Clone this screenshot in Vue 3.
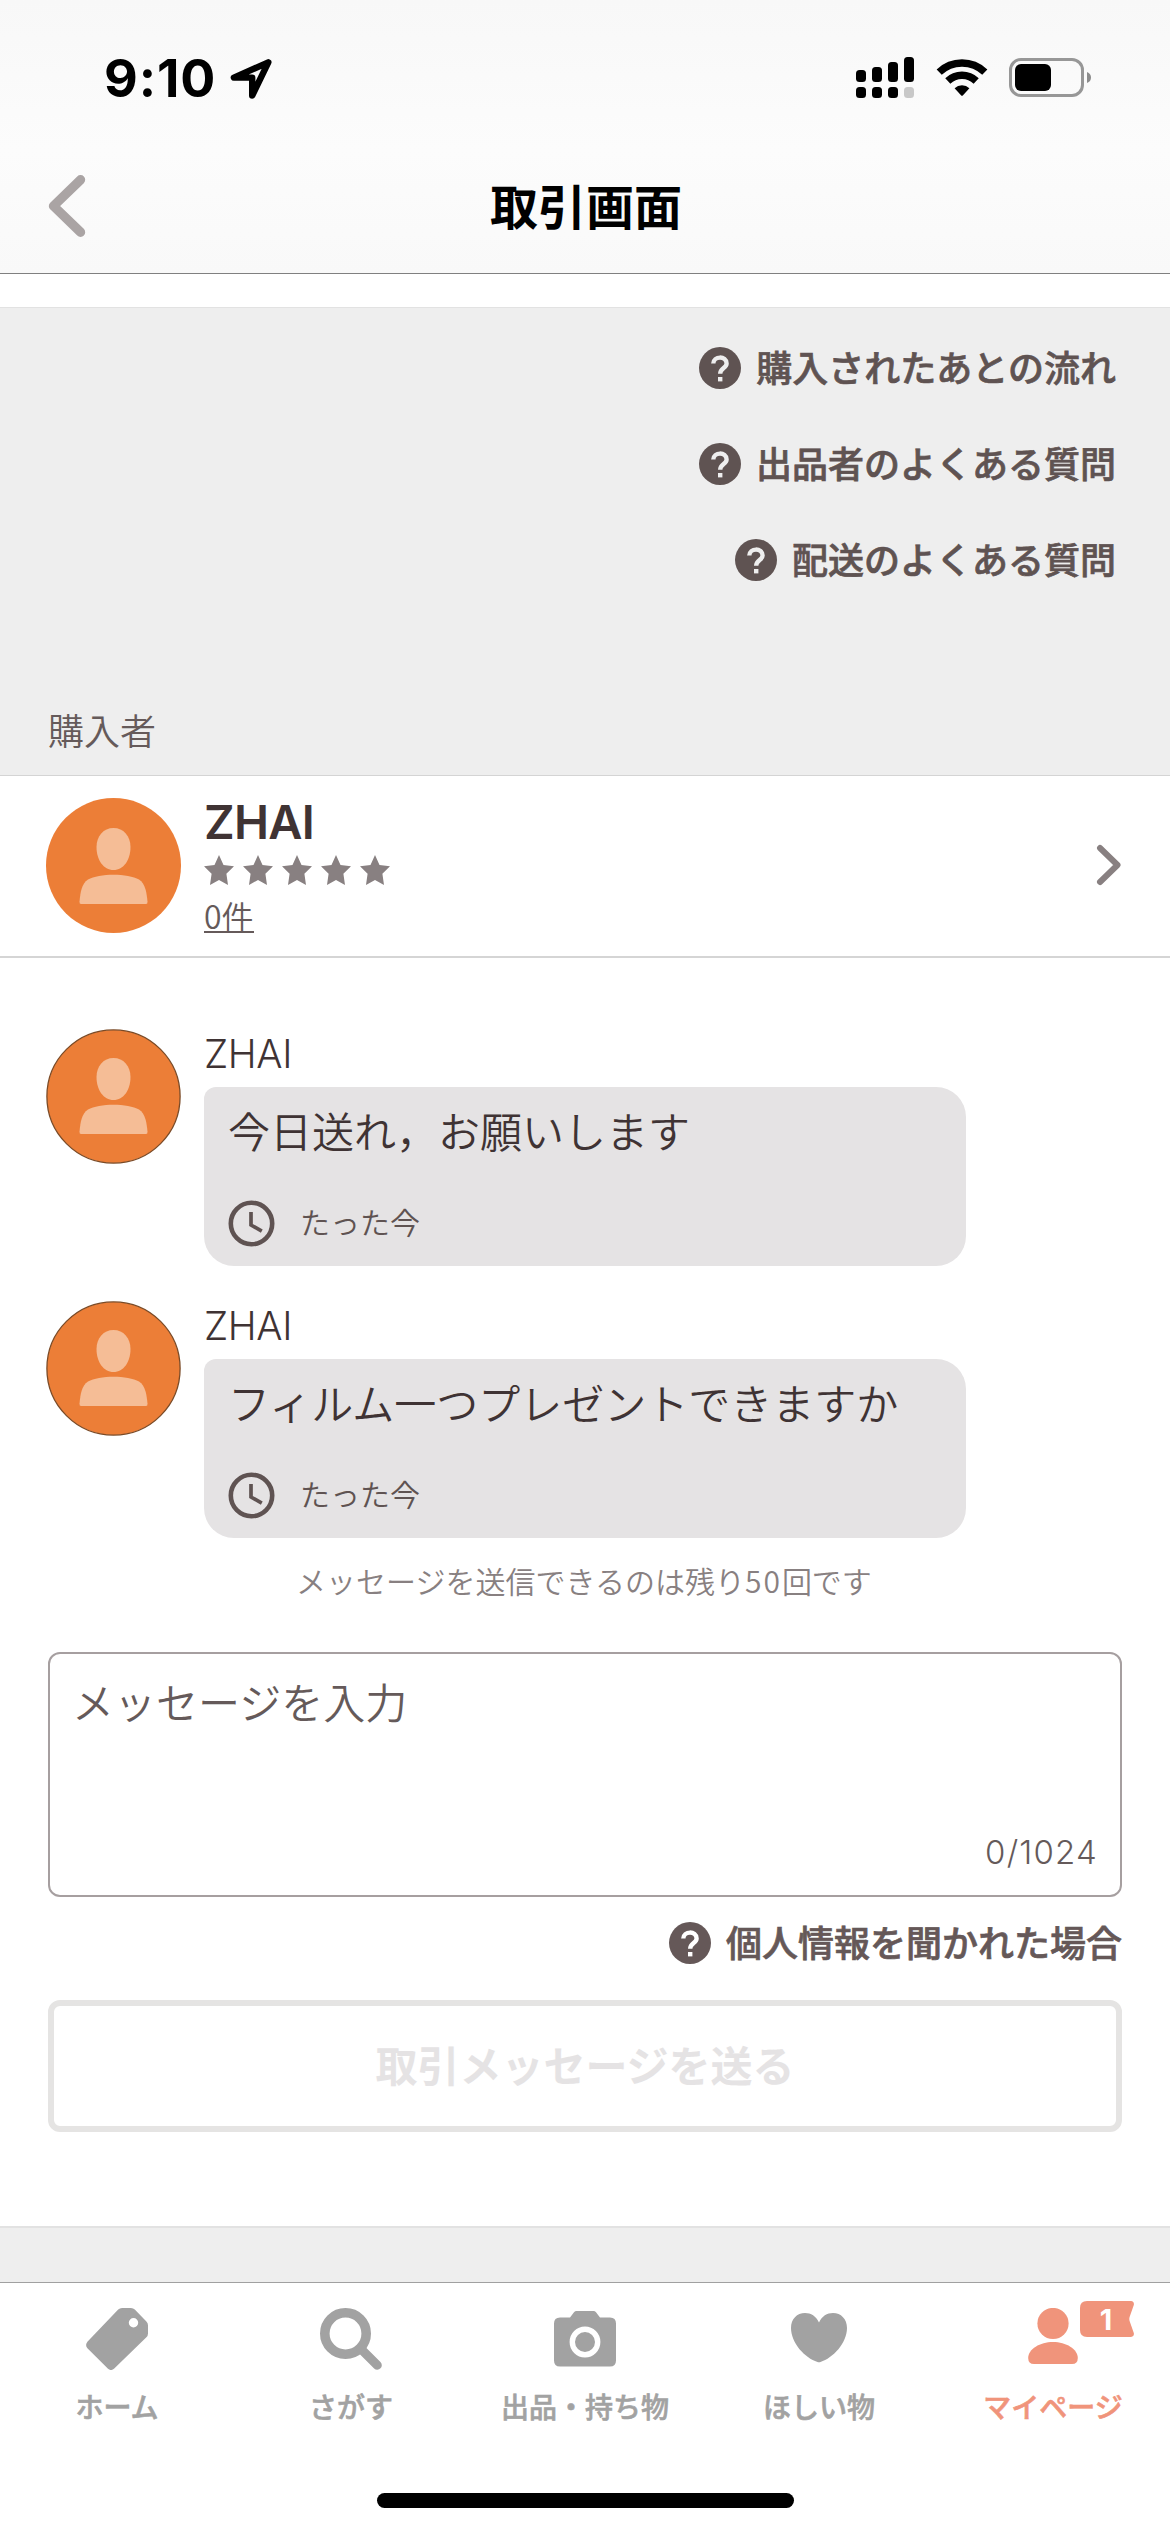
<script setup>
const faqLinks = ['購入されたあとの流れ', '出品者のよくある質問', '配送のよくある質問']

const messages = [
  { name: 'ZHAI', text: '今日送れ，お願いします', time: 'たった今' },
  { name: 'ZHAI', text: 'フィルム一つプレゼントできますか', time: 'たった今' },
]

const tabs = [
  { id: 'home', label: 'ホーム' },
  { id: 'search', label: 'さがす' },
  { id: 'sell', label: '出品・持ち物' },
  { id: 'wish', label: 'ほしい物' },
  { id: 'mypage', label: 'マイページ', active: true, badge: 1 },
]
</script>

<template>
  <div class="screen">
    <header class="header">
      <div class="status">
        <div class="status-left">
          <span class="clock-text">9:10</span>
          <svg class="location" width="42" height="42" viewBox="0 0 42 42">
            <path d="M38.300 4.300 L3.900 19.600 H22.200 V37.500 Z" fill="none" stroke="#000" stroke-width="6.400" stroke-linejoin="round" />
          </svg>
        </div>
        <div class="status-right">
          <svg width="58" height="42" viewBox="0 0 58 42">
            <rect x="0" y="13" width="10" height="12" rx="3.5" />
            <rect x="16" y="10" width="10" height="15" rx="3.5" />
            <rect x="32" y="5" width="10" height="20" rx="3.5" />
            <rect x="48" y="0" width="10" height="25" rx="3.5" />
            <rect x="0" y="30" width="10" height="11" rx="3.5" />
            <rect x="16" y="30" width="10" height="11" rx="3.5" />
            <rect x="32" y="30" width="10" height="11" rx="3.5" />
            <rect x="48" y="30" width="10" height="11" rx="3.5" fill="#c8c8c8" />
          </svg>
          <svg class="wifi" width="52" height="38" viewBox="0 0 52 38">
            <path d="M3.2 13.2 A33 33 0 0 1 48.8 13.2" fill="none" stroke="#000" stroke-width="7.4" />
            <path d="M11.8 22 A20.5 20.5 0 0 1 40.2 22" fill="none" stroke="#000" stroke-width="7.4" />
            <path d="M18.6 29.3 A10.5 10.5 0 0 1 33.4 29.3 L26.8 36.4 Q26 37.2 25.2 36.4 Z" />
          </svg>
          <svg class="battery" width="83" height="39" viewBox="0 0 83 39">
            <rect x="1.5" y="1.5" width="72" height="36" rx="10.5" fill="none" stroke="#979797" stroke-width="3" />
            <rect x="6" y="6" width="36" height="27" rx="6" />
            <path d="M78 14 Q82 15.5 82 19.5 Q82 23.5 78 25 Z" fill="#8c8c8c" />
          </svg>
        </div>
      </div>
      <div class="nav">
        <svg class="back" width="38" height="62" viewBox="0 0 38 62">
          <path d="M32.5 4.8 L5.5 31 L32.5 57.2" fill="none" stroke="#aaa4a4" stroke-width="9.4" stroke-linecap="round" stroke-linejoin="round" />
        </svg>
        <h1>取引画面</h1>
        <span class="nav-end"></span>
      </div>
    </header>

    <section class="faq">
      <a v-for="link in faqLinks" :key="link" class="help">
        <svg class="q" width="42" height="42" viewBox="0 0 42 42">
          <circle cx="21" cy="21" r="21" fill="#5f5352" />
          <path d="M14.3 16.6 C14.3 8.6 27.6 8.6 27.6 16.4 C27.6 21.2 21.2 21 21.2 26.8" fill="none" stroke="#eee" stroke-width="4.4" />
          <rect x="19" y="30" width="4.4" height="4.4" fill="#eee" />
        </svg>
        <span>{{ link }}</span>
      </a>
      <h2>購入者</h2>
    </section>

    <section class="buyer">
      <svg class="avatar" width="135" height="135" viewBox="0 0 135 135">
        <circle cx="67.5" cy="67.5" r="67.5" fill="#ec7e37" />
        <path d="M67.5 30 C77.500 30 84.500 38 84.500 49 C84.500 62 77.500 72 67.500 72 C57.500 72 50.500 62 50.500 49 C50.500 38 57.500 30 67.500 30 Z" fill="#f5bd96" />
        <path d="M35 106 Q33.300 106 33.500 103.500 C34.500 94 35.500 86 42 81.500 C53 75 82 75 93 81.500 C99.500 86 100.500 94 101.500 103.500 Q101.700 106 100 106 Z" fill="#f5bd96" />
      </svg>
      <div class="buyer-info">
        <strong>ZHAI</strong>
        <div class="stars">
          <svg v-for="n in 5" :key="n" width="30" height="30" viewBox="0 0 30 30">
            <path d="M15 0 L19.500 10 L30 11.300 L22.400 18.800 L24 30 L15 24.900 L6 30 L7.600 18.800 L0 11.300 L10.500 10 Z" fill="#888081" />
          </svg>
        </div>
        <a class="count">0件</a>
      </div>
      <svg class="next" width="26" height="42" viewBox="0 0 26 42">
        <path d="M4 4 L21.500 21 L4 38" fill="none" stroke="#888081" stroke-width="6" stroke-linecap="round" stroke-linejoin="round" />
      </svg>
    </section>

    <section class="thread">
      <article v-for="message in messages" :key="message.text" class="message">
        <svg class="avatar" width="135" height="135" viewBox="0 0 135 135">
          <circle cx="67.500" cy="67.500" r="66.600" fill="#ec7e37" stroke="#7a4a26" stroke-width="1.300" />
          <path d="M67.500 29 C77.500 29 84.500 37 84.500 48 C84.500 61 77.500 71 67.500 71 C57.500 71 50.500 61 50.500 48 C50.500 37 57.500 29 67.500 29 Z" fill="#f5bd96" />
          <path d="M35 105 Q33.300 105 33.500 102.500 C34.500 93 35.500 85 42 80.500 C53 74 82 74 93 80.500 C99.500 85 100.500 93 101.500 102.500 Q101.700 105 100 105 Z" fill="#f5bd96" />
        </svg>
        <div class="message-body">
          <div class="sender">{{ message.name }}</div>
          <div class="bubble">
            <p>{{ message.text }}</p>
            <div class="time">
              <svg width="47" height="47" viewBox="0 0 47 47">
                <circle cx="23.500" cy="23.500" r="20.700" fill="none" stroke="#5f5352" stroke-width="4.600" />
                <path d="M23 12 V25 L33.800 31.200" fill="none" stroke="#5f5352" stroke-width="3.700" />
              </svg>
              <span>{{ message.time }}</span>
            </div>
          </div>
        </div>
      </article>
      <p class="remaining">メッセージを送信できるのは残り<span class="number">50</span>回です</p>
    </section>

    <section class="composer">
      <div class="input">
        <span class="placeholder">メッセージを入力</span>
        <span class="counter">0/1024</span>
      </div>
      <a class="help">
        <svg class="q" width="42" height="42" viewBox="0 0 42 42">
          <circle cx="21" cy="21" r="21" fill="#655858" />
          <path d="M14.300 16.600 C14.300 8.600 27.600 8.600 27.600 16.400 C27.600 21.200 21.200 21 21.200 26.800" fill="none" stroke="#fff" stroke-width="4.400" />
          <rect x="19" y="30" width="4.400" height="4.400" fill="#fff" />
        </svg>
        <span>個人情報を聞かれた場合</span>
      </a>
      <button class="send" disabled>取引メッセージを送る</button>
    </section>

    <div class="filler"></div>

    <nav class="tabs">
      <a v-for="tab in tabs" :key="tab.id" class="tab" :class="{ active: tab.active }">
        <span class="tab-icon">
          <svg width="62" height="62" viewBox="0 0 62 62" fill="currentColor">
            <path v-if="tab.id === 'home'" fill-rule="evenodd" d="M36 0 H45 Q47.200 0 48.800 1.600 L60.400 13.400 Q62 15 62 17.200 V25.500 Q62 27.700 60.400 29.300 L28 60.700 Q25 63.400 22 60.700 L1.400 40.300 Q-1.200 37 1.400 33.700 L32.200 1.600 Q33.800 0 36 0 Z M47.500 10 A4.700 4.700 0 1 0 47.500 19.400 A4.700 4.700 0 1 0 47.500 10 Z" />
            <g v-else-if="tab.id === 'search'" fill="none" stroke="currentColor">
              <circle cx="25.500" cy="25.500" r="20.700" stroke-width="9.600" />
              <path d="M41 41 L57.300 57.200" stroke-width="9" stroke-linecap="round" />
            </g>
            <template v-else-if="tab.id === 'sell'">
              <path d="M6 9.500 H16 L20 4.300 Q21 3 22.500 3 H39.500 Q41 3 42 4.300 L46 9.500 H56 Q62 9.500 62 15.500 V52.500 Q62 58.500 56 58.500 H6 Q0 58.500 0 52.500 V15.500 Q0 9.500 6 9.500 Z" />
              <circle cx="31" cy="34" r="12.700" fill="none" stroke="#fff" stroke-width="5.400" />
            </template>
            <path v-else-if="tab.id === 'wish'" d="M31 14.500 C34 8 39 5 45 5 C53 5 59 11 59 20 C59 35 45 50 32.500 54 Q31 54.600 29.500 54 C17 50 3 35 3 20 C3 11 9 5 17 5 C23 5 28 8 31 14.500 Z" />
            <template v-else>
              <circle cx="31" cy="15.500" r="15.600" />
              <path d="M12 56 Q6.200 56 6.200 50 C6.200 41 18 34 31 34 C44 34 55.800 41 55.800 50 Q55.800 56 50 56 Z" />
            </template>
          </svg>
          <span v-if="tab.badge" class="badge">
            <svg class="flag" width="54" height="36" viewBox="0 0 54 36">
              <path d="M7 0 H51 Q54.500 .5 53.800 4 L49.600 16 Q49 18 49.600 20 L53.800 32 Q54.500 35.500 51 36 H7 Q0 36 0 29 V7 Q0 0 7 0 Z" fill="#f0947b" />
            </svg>
            <b>{{ tab.badge }}</b>
          </span>
        </span>
        <span class="tab-label">{{ tab.label }}</span>
      </a>
    </nav>
    <div class="home-area"><span class="home-indicator"></span></div>
  </div>
</template>

<style>
body {
  margin: 0;
  background: #fff;
}
</style>

<style scoped>
.screen {
  box-sizing: border-box;
  width: 1170px;
  height: 2532px;
  display: flex;
  flex-direction: column;
  overflow: hidden;
  background: #fff;
  color: #3f3334;
  font-family: "Noto Sans CJK JP", sans-serif;
}
.screen svg {
  display: block;
  flex: none;
}
h1, h2, p {
  margin: 0;
}

/* Status bar and navigation */
.header {
  box-sizing: border-box;
  flex: none;
  height: 274px;
  border-bottom: 1px solid #808080;
  background: linear-gradient(#f8f8f8, #fcfcfc 55%, #f9f9f9);
}
.status {
  display: flex;
  justify-content: space-between;
  height: 142px;
  padding: 57px 78px 0 104px;
  box-sizing: border-box;
}
.status-left, .status-right {
  display: flex;
  align-items: flex-start;
}
.clock-text {
  width: 126px;
  color: #000;
  font: 700 52px/43px Inter, sans-serif;
  letter-spacing: 0.9px;
}
.location {
  margin-top: 1px;
}
.wifi {
  margin: 2px 0 0 22px;
}
.battery {
  margin: 1px 0 0 21px;
}
.nav {
  display: flex;
  align-items: center;
  justify-content: space-between;
  height: 128px;
  padding: 0 48px;
}
.nav h1 {
  padding-bottom: 5px;
  color: #000;
  font-size: 48px;
  font-weight: 700;
  line-height: 64px;
}
.nav-end {
  width: 36px;
}

/* Help links */
.help {
  display: flex;
  align-items: center;
  justify-content: flex-end;
  height: 42px;
  color: #5f5352;
  font-size: 36px;
  font-weight: 500;
  line-height: 42px;
  -webkit-text-stroke: 0.7px currentColor;
}
.help span {
  padding-bottom: 4px;
}
.q {
  margin-right: 15px;
}
.faq {
  box-sizing: border-box;
  flex: none;
  display: flex;
  flex-direction: column;
  gap: 54px;
  height: 469px;
  margin-top: 33px;
  padding: 39px 54px 0 48px;
  border-top: 1px solid #e2e2e2;
  border-bottom: 1px solid #d4d4d4;
  background: #eee;
}
.faq h2 {
  margin-top: 73px;
  color: #655a5a;
  font-size: 36px;
  font-weight: 350;
  line-height: 42px;
}

/* Buyer row */
.buyer {
  box-sizing: border-box;
  flex: none;
  display: flex;
  align-items: flex-start;
  height: 182px;
  padding: 22px 48px 0 46px;
  border-bottom: 2px solid #d5d5d5;
}
.buyer-info {
  flex: 1;
  margin-left: 23px;
}
.buyer-info strong {
  display: block;
  color: #3f3334;
  font: 600 47px/48px Inter, sans-serif;
  letter-spacing: -0.7px;
}
.stars {
  display: flex;
  gap: 9px;
  margin-top: 9px;
}
.count {
  display: inline-block;
  margin-top: 15px;
  height: 31px;
  border-bottom: 2px solid #655a5a;
  color: #655a5a;
  font-size: 32px;
  font-weight: 350;
  line-height: 31px;
}
.next {
  margin-top: 46px;
}

/* Message thread */
.thread {
  display: flex;
  flex-direction: column;
  gap: 35px;
  padding: 71px 48px 0 46px;
}
.message {
  display: flex;
  align-items: flex-start;
}
.message-body {
  margin-left: 23px;
}
.sender {
  height: 58px;
  font: 300 39px/49px Inter, sans-serif;
  letter-spacing: -0.4px;
}
.bubble {
  box-sizing: border-box;
  width: 762px;
  height: 179px;
  padding: 20px 24px 0;
  border-radius: 12px 30px 30px 30px;
  background: #e5e3e4;
}
.bubble p {
  font-size: 42px;
  font-weight: 350;
  line-height: 46px;
  white-space: nowrap;
}
.time {
  display: flex;
  align-items: center;
  gap: 25px;
  margin-top: 46px;
  color: #5f5352;
  font-size: 30px;
  font-weight: 350;
  line-height: 44px;
}
.time span {
  padding-bottom: 4px;
}
.remaining {
  margin-top: -11px;
  color: #888081;
  font-size: 30px;
  font-weight: 350;
  line-height: 36px;
  text-align: center;
}
.number {
  letter-spacing: 2px;
}

/* Composer */
.composer {
  display: flex;
  flex-direction: column;
  padding: 54px 48px 0;
}
.input {
  box-sizing: border-box;
  display: flex;
  flex-direction: column;
  justify-content: space-between;
  height: 245px;
  padding: 24px 22px 23px 22px;
  border: 2px solid #a69fa0;
  border-radius: 12px;
  color: #655a5a;
}
.placeholder {
  font-size: 42px;
  font-weight: 350;
  line-height: 46px;
}
.counter {
  align-self: flex-end;
  font: 300 33px/40px Inter, sans-serif;
  letter-spacing: 1.2px;
}
.composer .help {
  margin-top: 25px;
  color: #655858;
}
.send {
  box-sizing: border-box;
  height: 132px;
  margin-top: 36px;
  padding: 0 0 5px;
  border: 6px solid #e5e4e3;
  border-radius: 12px;
  background: #fff;
  color: #e5e3e4;
  font-family: inherit;
  font-size: 42px;
  font-weight: 700;
  line-height: 60px;
}
.filler {
  box-sizing: border-box;
  flex: none;
  height: 56px;
  margin-top: 94px;
  border-top: 2px solid #e2e2e2;
  background: #eee;
}

/* Tab bar */
.tabs {
  box-sizing: border-box;
  flex: none;
  display: flex;
  height: 148px;
  padding-top: 25px;
  border-top: 1px solid #a0a0a0;
}
.tab {
  flex: 1;
  display: flex;
  flex-direction: column;
  align-items: center;
  color: #a2a2a2;
}
.tab.active {
  color: #f0947b;
}
.tab-icon {
  position: relative;
}
.tab-label {
  margin-top: 19px;
  font-size: 28px;
  font-weight: 500;
  line-height: 34px;
  white-space: nowrap;
  -webkit-text-stroke: 0.6px currentColor;
}
.badge {
  position: absolute;
  top: -7px;
  left: 58px;
  width: 54px;
  height: 36px;
}
.flag {
  position: absolute;
}
.badge b {
  position: relative;
  display: block;
  width: 52px;
  color: #fff;
  font: 700 29px/37px Inter, sans-serif;
  text-align: center;
}
.home-area {
  display: flex;
  justify-content: center;
  padding-top: 63px;
}
.home-indicator {
  width: 417px;
  height: 15px;
  border-radius: 8px;
  background: #000;
}
</style>
